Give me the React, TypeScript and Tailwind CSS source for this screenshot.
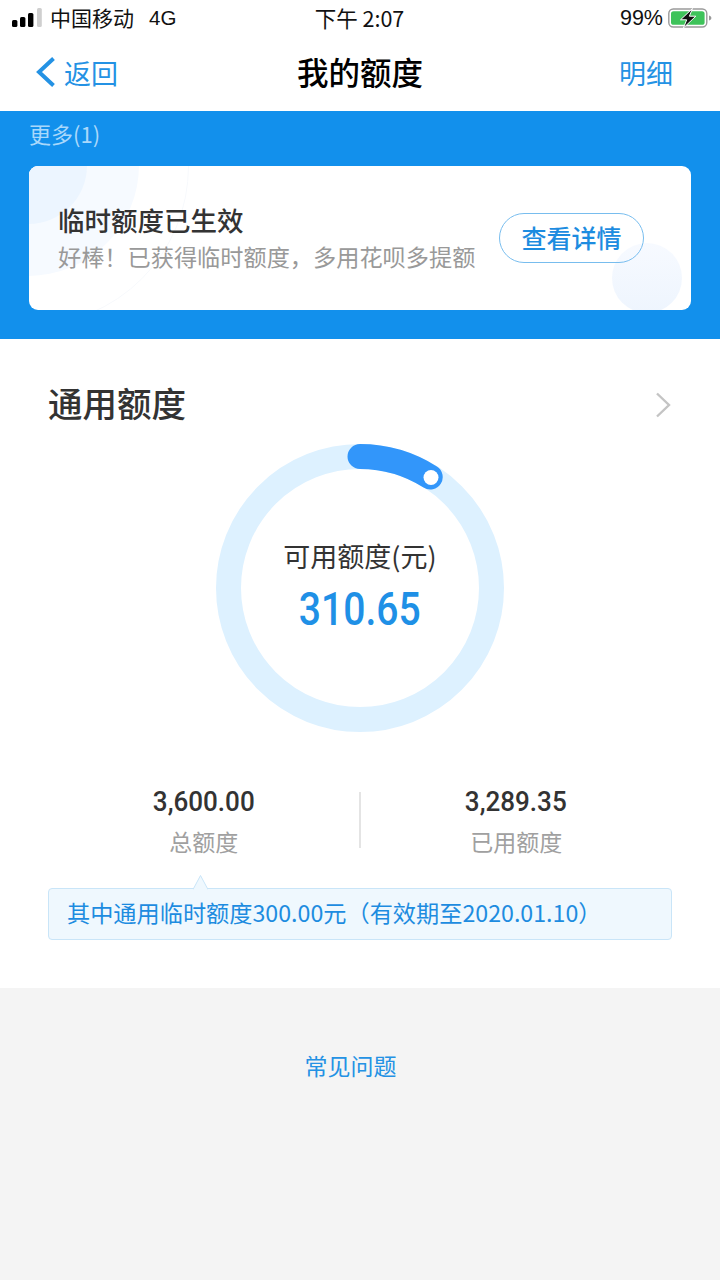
import React from "react";

const cjk = "font-['Noto_Sans_CJK_SC','Noto_Sans',sans-serif]";

function Signal() {
  return (
    <svg width="30" height="20" viewBox="0 0 30 20" className="shrink-0">
      <rect x="0" y="12" width="5.4" height="7" rx="1.5" fill="#000" />
      <rect x="8" y="9" width="5.4" height="10" rx="1.5" fill="#000" />
      <rect x="16" y="5" width="5.4" height="14" rx="1.5" fill="#000" />
      <rect x="25" y="0" width="4.8" height="19" rx="1.5" fill="#cfcfcf" />
    </svg>
  );
}

function Battery() {
  return (
    <svg width="44" height="20" viewBox="0 0 44 20" className="shrink-0">
      <rect x="0.8" y="1" width="38" height="18" rx="4.5" fill="none" stroke="#9a9a9a" strokeWidth="1.4" />
      <rect x="3" y="3.2" width="33.6" height="13.6" rx="2.6" fill="#3ec35a" />
      <path d="M41 7.5c1.6.4 2.4 1.3 2.4 2.5s-.8 2.1-2.4 2.5z" fill="#9a9a9a" />
      <path d="M24.5 0.5 12.5 11.8h6.2L15.4 20l12.4-11.8h-6.4z" fill="#111" stroke="#fff" strokeWidth="1" />
    </svg>
  );
}

function Ring() {
  return (
    <svg width="288" height="288" viewBox="0 0 288 288">
      <circle cx="144" cy="144" r="131.5" fill="none" stroke="#ddf1ff" strokeWidth="25" />
      <path d="M144 12.5A131.5 131.5 0 0 1 214.2 33" fill="none" stroke="#3296fa" strokeWidth="25" strokeLinecap="round" />
      <circle cx="215" cy="33.5" r="7.5" fill="#fff" />
    </svg>
  );
}

export default function App() {
  return (
    <div className={`${cjk} flex min-h-[1280px] w-[720px] flex-col bg-[#f4f4f4]`}>
      <header className="bg-white">
        <div className="grid h-[36px] grid-cols-3 items-center pb-[1px] pl-3 pr-[8px]">
          <div className="flex items-center">
            <Signal />
            <span className="ml-[8px] text-[21px] leading-none text-[#111]">中国移动</span>
            <span className="ml-[15px] mt-[2px] font-['Liberation_Sans'] text-[20.5px] leading-none text-[#111]">4G</span>
          </div>
          <span className="ml-[-5px] text-center text-[21.5px] leading-none text-[#111]">下午 2:07</span>
          <div className="flex items-center justify-end gap-[5px]">
            <span className="mt-[2px] font-['Liberation_Sans'] text-[21.5px] leading-none text-[#111]">99%</span>
            <Battery />
          </div>
        </div>
        <div className="grid h-[75px] grid-cols-[1fr_auto_1fr] items-center px-[35px] pb-[3px]">
          <div className="flex items-center gap-[8px]">
            <svg width="21" height="30" viewBox="0 0 21 30" className="shrink-0">
              <path d="M18.5 1.5 4 15l14.5 13.5" fill="none" stroke="#2492e4" strokeWidth="4" />
            </svg>
            <span className="text-[27px] leading-none text-[#2492e4]">返回</span>
          </div>
          <h1 className="text-[31.5px] font-medium leading-none text-black">我的额度</h1>
          <span className="pr-[12px] text-right text-[27px] leading-none text-[#2492e4]">明细</span>
        </div>
      </header>

      <section className="h-[228px] bg-[#1290ec] px-[29px]">
        <div className="flex h-[55px] items-start pt-[7px]">
          <span className="text-[22px] leading-[30px] text-[#a9d8fb]">更多(1)</span>
        </div>
        <div className="relative flex h-[144px] items-center justify-between overflow-hidden rounded-[9px] bg-white pl-[29px] pr-[47px]">
          <div className="absolute -left-[160px] -top-[160px] h-[320px] w-[320px] rounded-full border border-[#f7f9fc]" />
          <div className="absolute -left-[112px] -top-[112px] h-[222px] w-[222px] rounded-full bg-[#f6faff]" />
          <div className="absolute -left-[59px] -top-[59px] h-[117px] w-[117px] rounded-full bg-[#ecf5ff]" />
          <div className="absolute -bottom-[3px] left-[583px] h-[70px] w-[70px] rounded-full bg-linear-to-b from-[#f7faff] to-[#eef5fe]" />
          <div className="relative">
            <div className="text-[26.5px] font-medium leading-[36px] text-[#333]">临时额度已生效</div>
            <div className="text-[23.2px] leading-[36px] text-[#999]">好棒！已获得临时额度，多用花呗多提额</div>
          </div>
          <div className="relative flex h-[50px] w-[145px] items-center justify-center rounded-full border border-[#78bdee] text-[25px] font-medium text-[#1d8ce0]">
            查看详情
          </div>
        </div>
      </section>

      <section className="flex h-[649px] flex-col bg-white px-[48px]">
        <div className="flex h-[105px] items-center justify-between pb-[2px] pr-[1px] pt-[24px]">
          <h2 className="text-[34.5px] font-medium leading-none text-[#333]">通用额度</h2>
          <svg width="16" height="26" viewBox="0 0 16 26" className="mt-[4px] shrink-0">
            <path d="M2 1.5 14 13 2 24.5" fill="none" stroke="#c4c4c4" strokeWidth="2.4" />
          </svg>
        </div>
        <div className="relative mx-auto h-[288px] w-[288px]">
          <Ring />
          <div className="absolute inset-0 flex flex-col items-center justify-center pb-[5px]">
            <span className="text-[27px] leading-[38px] text-[#333]">可用额度(元)</span>
            <span className="mt-[8px] scale-x-[0.85] font-['Roboto'] text-[46px] font-medium leading-[52px] text-[#1f90e6]">310.65</span>
          </div>
        </div>
        <div className="mt-[60px] grid grid-cols-[1fr_1px_1fr]">
          <div className="flex flex-col items-center">
            <span className="scale-x-[0.93] font-['Roboto'] text-[28px] font-medium leading-[20px] text-[#333]">3,600.00</span>
            <span className="mt-[15px] text-[23px] leading-[28px] text-[#a0a0a0]">总额度</span>
          </div>
          <div className="-ml-[1px] h-[56px] bg-[#e4e4e4]" />
          <div className="flex flex-col items-center">
            <span className="scale-x-[0.93] font-['Roboto'] text-[28px] font-medium leading-[20px] text-[#333]">3,289.35</span>
            <span className="mt-[15px] text-[23px] leading-[28px] text-[#a0a0a0]">已用额度</span>
          </div>
        </div>
        <div className="relative mt-[33px] flex h-[52px] items-center rounded-[4px] border border-[#c9e5f8] bg-[#eff8fe] pb-[2px] pl-[18px]">
          <svg width="15" height="15" viewBox="0 0 15 15" className="absolute -top-[14px] left-[144px]">
            <path d="M0 14.5 7.5 .5l7.5 14" fill="#eff8fe" stroke="#c9e5f8" strokeWidth="1" />
          </svg>
          <span className="text-[23.2px] leading-none text-[#1d8ce0]">其中通用临时额度300.00元（有效期至2020.01.10）</span>
        </div>
      </section>

      <footer className="flex justify-center pr-[19px] pt-[60px]">
        <span className="text-[23px] leading-[34px] text-[#2492e4]">常见问题</span>
      </footer>
    </div>
  );
}
